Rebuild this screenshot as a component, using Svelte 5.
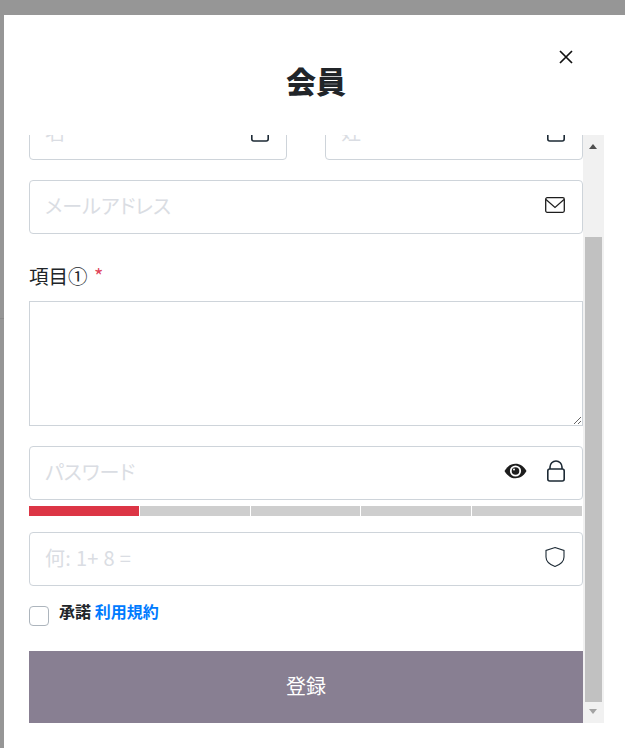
<script>
  const segmentos = [true, false, false, false, false];
</script>

<div class="fondo">
  <div class="linea"></div>
  <div class="modal">
    <header class="cabecera">
      <h2>会員</h2>
      <button class="cerrar" aria-label="閉じる">
        <svg width="14" height="14" viewBox="0 0 14 14"><path d="M1 1l12 12M13 1L1 13" stroke="#111" stroke-width="1.7" fill="none"/></svg>
      </button>
    </header>

    <div class="cuerpo">
      <form class="formulario">
        <div class="fila-nombre">
          <div class="campo">
            <input placeholder="名" />
            <svg class="icono" width="18" height="22" viewBox="0 0 18 22"><path d="M3 9V7a6 6 0 0 1 12 0v2" fill="none" stroke="#1d2a35" stroke-width="1.6"/><rect x="0.8" y="9" width="16.4" height="12" rx="2" fill="none" stroke="#1d2a35" stroke-width="1.6"/></svg>
          </div>
          <div class="campo">
            <input placeholder="姓" />
            <svg class="icono" width="18" height="22" viewBox="0 0 18 22"><path d="M3 9V7a6 6 0 0 1 12 0v2" fill="none" stroke="#1d2a35" stroke-width="1.6"/><rect x="0.8" y="9" width="16.4" height="12" rx="2" fill="none" stroke="#1d2a35" stroke-width="1.6"/></svg>
          </div>
        </div>

        <div class="campo">
          <input placeholder="メールアドレス" />
          <svg class="icono" width="20" height="16" viewBox="0 0 20 16"><rect x="0.7" y="0.7" width="18.6" height="14.6" rx="1.500" fill="none" stroke="#1d1d1d" stroke-width="1.300"/><path d="M1 2.500l9 8 9-8" fill="none" stroke="#1d1d1d" stroke-width="1.200"/></svg>
        </div>

        <label class="etiqueta" for="item1">項目① <span class="req">*</span></label>
        <textarea id="item1"></textarea>

        <div class="campo">
          <input placeholder="パスワード" />
          <svg class="icono" width="23" height="16" viewBox="0 0 23 16"><path d="M0.500 8C3.500 3 7 0.800 11.500 0.800S19.500 3 22.500 8c-3 5-6.500 7.200-11 7.200S3.500 13 0.500 8z" fill="#1d1d1d"/><circle cx="11.500" cy="8" r="5.600" fill="#fff"/><circle cx="11.500" cy="8" r="3.800" fill="#1d1d1d"/><circle cx="10" cy="6.500" r="1" fill="#fff"/></svg>
          <svg class="icono" width="18" height="22" viewBox="0 0 18 22"><path d="M3 9V7a6 6 0 0 1 12 0v2" fill="none" stroke="#1d2a35" stroke-width="1.600"/><rect x="0.800" y="9" width="16.400" height="12" rx="2" fill="none" stroke="#1d2a35" stroke-width="1.600"/></svg>
        </div>

        <div class="fuerza">
          {#each segmentos as activo}
            <span class:activo></span>
          {/each}
        </div>

        <div class="campo">
          <input class="suma" placeholder="何: 1+ 8 =" />
          <svg class="icono" width="20" height="22" viewBox="0 0 20 22"><path d="M10 1.500l9 3v6.500c0 4.500-3.500 7.500-9 9.500C4.500 18.500 1 15.500 1 11V4.500z" fill="none" stroke="#1d2a35" stroke-width="1.100"/></svg>
        </div>

        <div class="acepto">
          <input type="checkbox" />
          <span class="texto">承諾 <a href="#terminos">利用規約</a></span>
        </div>

        <button class="registrar" type="button">登録</button>
      </form>

      <div class="barra">
        <span class="flecha arriba"></span>
        <div class="pulgar"></div>
        <span class="flecha abajo"></span>
      </div>
    </div>
  </div>
</div>

<style>
  :global(body) {
    margin: 0;
    background: #969696;
    font-family: "Noto Sans CJK JP", "Noto Sans", sans-serif;
    color: #212529;
  }
  .fondo {
    position: relative;
    height: 748px;
    padding: 15px 0 0 4px;
    box-sizing: border-box;
    overflow: hidden;
  }
  .linea {
    position: absolute;
    top: 318px;
    left: 0;
    width: 4px;
    height: 1px;
    background: #8a8a8a;
  }
  .modal {
    position: relative;
    background: #fff;
    height: 733px;
  }
  .cabecera {
    height: 120px;
    display: flex;
    align-items: flex-end;
    justify-content: center;
    padding-left: 3px;
    box-sizing: border-box;
  }
  h2 {
    margin: 0 0 34px;
    font-size: 30px;
    line-height: 42px;
    font-weight: 900;
  }
  .cerrar {
    position: absolute;
    top: 35px;
    right: 52px;
    width: 14px;
    height: 14px;
    padding: 0;
    border: 0;
    background: none;
    display: flex;
  }
  .cuerpo {
    display: flex;
    height: 588px;
    padding-left: 25px;
    overflow: hidden;
  }
  .formulario {
    width: 554px;
    display: flex;
    flex-direction: column;
    flex: none;
  }
  .fila-nombre {
    display: flex;
    gap: 38px;
    margin-top: -29px;
    margin-bottom: 20px;
  }
  .fila-nombre .campo {
    flex: 1 1 0;
    min-width: 0;
  }
  .campo {
    position: relative;
    height: 54px;
    display: flex;
    align-items: center;
    justify-content: flex-end;
    gap: 20px;
    padding-right: 17px;
    border: 1px solid #ced4da;
    border-radius: 4px;
    box-sizing: border-box;
  }
  .campo input {
    flex: 1;
    min-width: 0;
    border: 0;
    outline: 0;
    padding: 0 0 2px 15px;
    font: 20px/28px "Noto Sans CJK JP", sans-serif;
    font-feature-settings: "palt";
    background: none;
  }
  .campo input.suma {
    letter-spacing: 0.3px;
  }
  input::placeholder {
    color: #dadde3;
  }
  .icono {
    flex: none;
    margin-top: -4px;
  }
  .etiqueta {
    margin-top: 29px;
    height: 28px;
    font-size: 19.5px;
    line-height: 26px;
    color: #212529;
  }
  .req {
    color: #e0455a;
    font-size: 20px;
    margin-left: 2px;
  }
  textarea {
    display: block;
    margin: 10px 0 20px;
    height: 125px;
    border: 1px solid #ced4da;
    box-sizing: border-box;
    outline: 0;
    padding: 8px;
  }
  .fuerza {
    display: flex;
    gap: 1px;
    height: 10px;
    margin: 6px 1px 16px 0;
  }
  .fuerza span {
    flex: 1;
    background: #cecece;
  }
  .fuerza span.activo {
    background: #dc3545;
  }
  .acepto {
    display: flex;
    align-items: flex-start;
    gap: 10px;
    margin-top: 20px;
    height: 45px;
  }
  .acepto input {
    appearance: none;
    width: 20px;
    height: 20px;
    margin: 0;
    border: 1px solid #adb5bd;
    border-radius: 4px;
    background: #fff;
  }
  .texto {
    font-size: 16px;
    line-height: 11px;
    font-weight: 700;
    color: #212529;
  }
  .texto a {
    color: #007bff;
    text-decoration: none;
  }
  .registrar {
    height: 72px;
    width: 554px;
    flex: none;
    border: 0;
    padding: 0 0 4px;
    background: #887f92;
    color: #fff;
    font: 20px "Noto Sans CJK JP", sans-serif;
  }
  .barra {
    position: relative;
    width: 21px;
    flex: none;
    background: #f1f1f1;
  }
  .pulgar {
    position: absolute;
    top: 102px;
    left: 2px;
    width: 17px;
    height: 465px;
    background: #c1c1c1;
  }
  .flecha {
    position: absolute;
    left: 6px;
    width: 0;
    height: 0;
    border-left: 4px solid transparent;
    border-right: 4px solid transparent;
  }
  .arriba {
    top: 9px;
    border-bottom: 5px solid #505050;
  }
  .abajo {
    bottom: 9px;
    border-top: 5px solid #a3a3a3;
  }
</style>
